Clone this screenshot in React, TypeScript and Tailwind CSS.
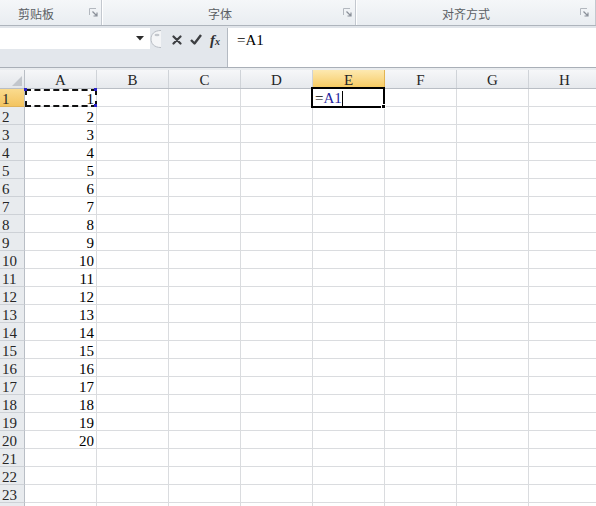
import React from "react";

const COLS = ["A", "B", "C", "D", "E", "F", "G", "H"];
const ROW_COUNT = 24;
const cellFont = { fontFamily: '"Liberation Serif", "DejaVu Serif", serif' };

function Launcher() {
  return (
    <svg width="9" height="9" viewBox="0 0 9 9" className="shrink-0">
      <path d="M0.5 7V0.5H7" fill="none" stroke="#b3b8bf" />
      <path d="M3.5 3.5L7.5 7.5M8 4.5V8H4.5" fill="none" stroke="#8a9099" strokeWidth="1.2" />
    </svg>
  );
}

function Separator() {
  return (
    <div className="flex h-full shrink-0">
      <div className="w-px bg-[#c3c8cf]" />
      <div className="w-px bg-white" />
    </div>
  );
}

function RibbonLabels() {
  const label = "text-[12px] text-[#5b5f64] pt-[2px] leading-none";
  const font = { fontFamily: '"Noto Sans CJK SC", "Noto Sans", sans-serif' };
  return (
    <div className="h-[25px] flex bg-gradient-to-b from-[#f5f7f9] to-[#e9edf1]" style={font}>
      <div className="w-[101px] shrink-0 flex items-center pl-[18px] pr-[3px]">
        <span className={label}>剪贴板</span>
        <div className="flex-1" />
        <Launcher />
      </div>
      <Separator />
      <div className="w-[252px] shrink-0 flex items-center pl-[105px] pr-[3px]">
        <span className={label}>字体</span>
        <div className="flex-1" />
        <Launcher />
      </div>
      <Separator />
      <div className="w-[238px] shrink-0 flex items-center pl-[85px] pr-[6px]">
        <span className={label}>对齐方式</span>
        <div className="flex-1" />
        <Launcher />
      </div>
      <Separator />
    </div>
  );
}

function FormulaBar() {
  return (
    <div className="flex h-[40px] border-b border-[#a9afb7]">
      <div className="w-[227px] shrink-0 flex flex-col bg-[#e3e7ec]">
        <div className="h-[21px] flex">
          {/* name box */}
          <div className="w-[150px] shrink-0 bg-white flex items-center justify-end pr-[6px]">
            <svg width="8" height="5" viewBox="0 0 8 5">
              <path d="M0 0H8L4 4.5Z" fill="#2b2b2b" />
            </svg>
          </div>
          {/* splitter grip */}
          <div className="w-[14px] shrink-0 flex items-center">
            <svg width="12" height="18" viewBox="0 0 12 18">
              <path d="M11 0.5C4 0.5 1 4.5 1 9C1 13.5 4 17.5 11 17.5" fill="#f4f5f7" stroke="#b7bcc3" />
              <ellipse cx="7" cy="5" rx="2.5" ry="1.3" fill="#c3c7cd" />
            </svg>
          </div>
          {/* cancel / enter / insert function */}
          <div className="flex items-center gap-[8px] pl-[8px] pt-[2px]">
            <svg width="10" height="10" viewBox="0 0 10 10">
              <path d="M1.5 1.5L8.5 8.5M8.5 1.5L1.5 8.5" stroke="#3d3f42" strokeWidth="2.2" strokeLinecap="round" />
            </svg>
            <svg width="12" height="11" viewBox="0 0 12 11">
              <path d="M1 6L4.5 9.5L11 1" fill="none" stroke="#3d3f42" strokeWidth="2.4" strokeLinejoin="round" />
            </svg>
            <span
              className="italic font-bold text-[#2f3134] leading-none"
              style={{ fontFamily: '"Liberation Serif", serif' }}
            >
              <span className="text-[15px]">f</span>
              <span className="text-[10px]">x</span>
            </span>
          </div>
        </div>
      </div>
      <div className="flex-1 bg-white border-l border-[#b4bac2] pl-[9px] pt-[5px]">
        <div className="text-[15px] leading-[15px] text-black" style={cellFont}>
          =A1
        </div>
      </div>
    </div>
  );
}

function ColumnHeaders() {
  return (
    <div className="flex h-[19px] border-b border-[#b9bec5]">
      <div className="w-[25px] shrink-0 h-full border-r border-[#b9bec5] bg-gradient-to-b from-[#f3f4f6] to-[#e3e6ea] relative">
        <svg width="10" height="10" viewBox="0 0 10 10" className="absolute right-[2px] bottom-[2px]">
          <path d="M10 0V10H0Z" fill="#c2c6cc" />
        </svg>
      </div>
      {COLS.map((c) => (
        <div
          key={c}
          className={
            c === "E"
              ? "w-[72px] shrink-0 h-full border-r border-[#e2b453] bg-gradient-to-b from-[#fde9b0] to-[#f6c95c] flex items-center justify-center pt-[2px] text-[15px] text-[#262626]"
              : "w-[72px] shrink-0 h-full border-r border-[#cfd3d8] bg-gradient-to-b from-[#f6f7f9] to-[#e6e9ed] flex items-center justify-center pt-[2px] text-[15px] text-[#262626]"
          }
          style={cellFont}
        >
          {c}
        </div>
      ))}
    </div>
  );
}

function Row({ n }: { n: number }) {
  const active = n === 1;
  return (
    <div className="flex h-[18px] shrink-0">
      <div
        className={
          active
            ? "w-[25px] shrink-0 h-full border-r border-b border-r-[#b9bec5] border-b-[#e0b35a] bg-gradient-to-b from-[#fadb8e] to-[#f3c45f] flex items-center pl-[2px] pt-[3px] text-[15px] text-[#262626]"
            : "w-[25px] shrink-0 h-full border-r border-b border-r-[#b9bec5] border-b-[#cdd1d6] bg-[#e8ebee] flex items-center pl-[2px] pt-[3px] text-[15px] text-[#262626]"
        }
        style={cellFont}
      >
        {n <= 23 ? n : ""}
      </div>
      {COLS.map((c) => (
        <div
          key={c}
          className="w-[72px] shrink-0 h-full border-r border-b border-[#dadcdf] bg-white flex items-center justify-end pr-[2px] pt-[3px] text-[15px] text-black"
          style={cellFont}
        >
          {c === "A" && n <= 20 ? n : ""}
        </div>
      ))}
    </div>
  );
}

function Sheet() {
  const rows = Array.from({ length: ROW_COUNT }, (_, i) => i + 1);
  return (
    <div className="relative">
      <ColumnHeaders />
      {rows.map((n) => (
        <Row key={n} n={n} />
      ))}

      {/* copied range A1: marching ants with reference handles */}
      <div className="absolute left-[25px] top-[19px] w-[72px] h-[18px] border-2 border-dashed border-[#111]" />
      <div className="absolute left-[24px] top-[18px] w-[3px] h-[3px] bg-[#2a22c8]" />
      <div className="absolute left-[94px] top-[18px] w-[3px] h-[3px] bg-[#2a22c8]" />
      <div className="absolute left-[94px] top-[34px] w-[3px] h-[3px] bg-[#2a22c8]" />

      {/* active cell E1 in edit mode */}
      <div className="absolute left-[311px] top-[17px] w-[74px] h-[21px] border-2 border-black bg-white flex items-center pl-[2px] pt-[2px]">
        <span className="text-[15px] leading-none" style={cellFont}>
          <span className="text-black">=</span>
          <span className="text-[#1f1f9e]">A1</span>
        </span>
        <span className="w-px h-[15px] bg-black" />
      </div>
      <div className="absolute left-[381px] top-[34px] w-[5px] h-[5px] bg-black border border-white" />
    </div>
  );
}

export default function App() {
  return (
    <div className="w-[596px] h-[506px] overflow-hidden bg-white">
      <RibbonLabels />
      <div className="h-px bg-[#aeb4bc]" />
      <div className="h-[2px] bg-[#e1e5ea]" />
      <FormulaBar />
      <div className="h-[2px] bg-[#e9ecef]" />
      <Sheet />
    </div>
  );
}
